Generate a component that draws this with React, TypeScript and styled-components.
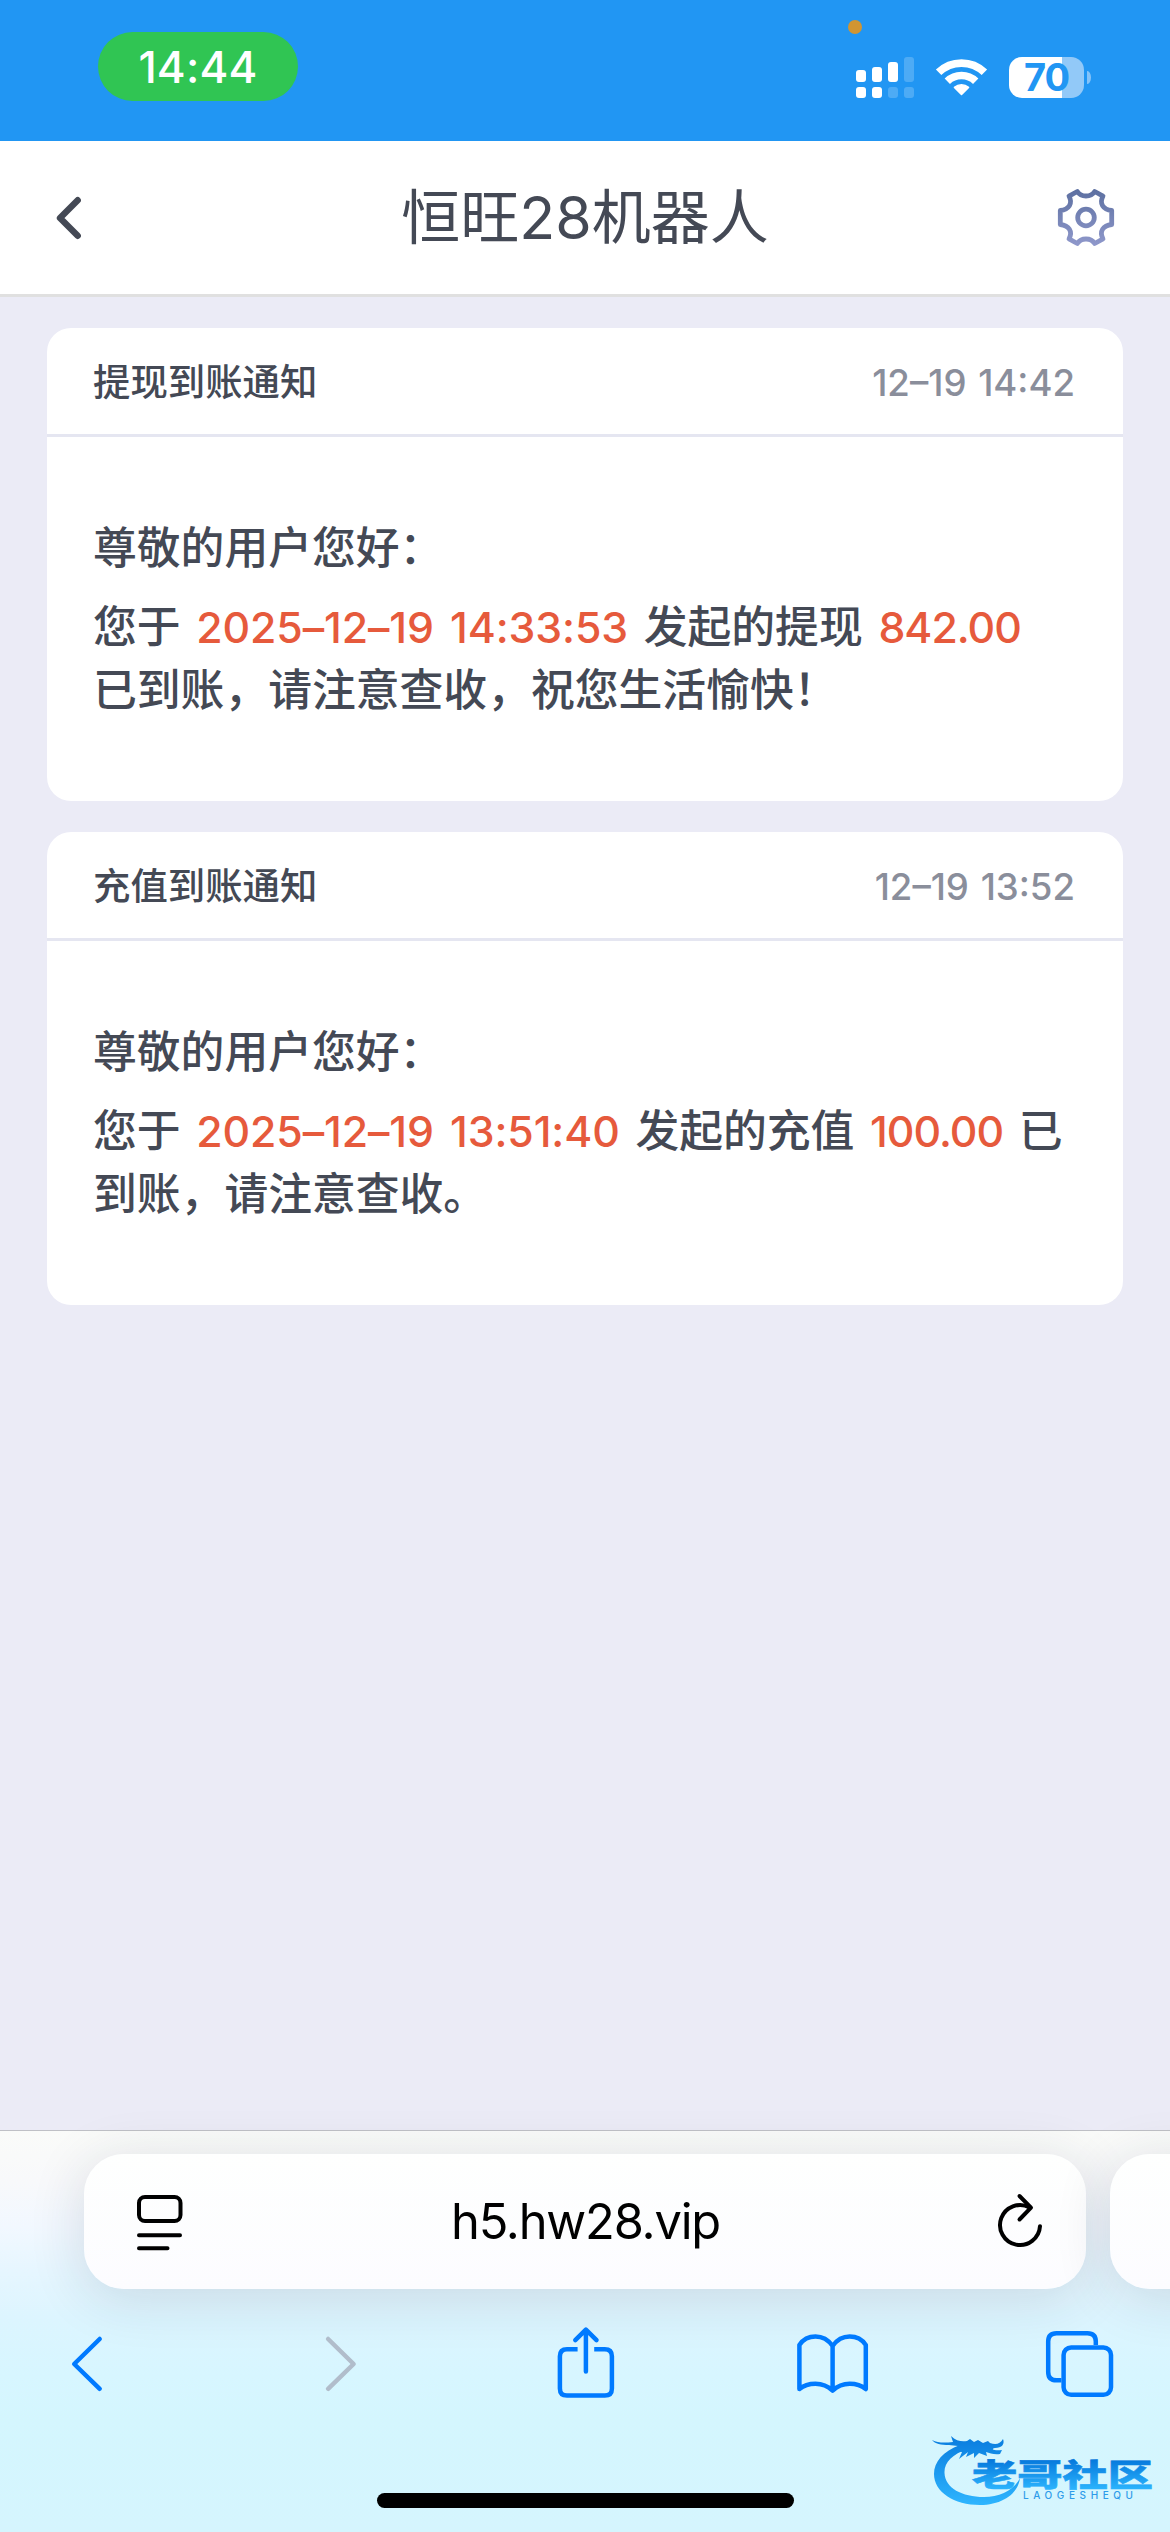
import React from "react";
import styled, { createGlobalStyle } from "styled-components";

const GlobalStyle = createGlobalStyle`
  * { box-sizing: border-box; }
  html, body { margin: 0; padding: 0; }
  body {
    width: 1170px;
    background: #ebebf6;
    font-family: Inter, "Noto Sans CJK SC", sans-serif;
    color: #444955;
  }
  svg { display: block; overflow: visible; }
`;

const Screen = styled.div`
  width: 1170px;
  height: 2532px;
  display: flex;
  flex-direction: column;
  overflow: hidden;
  background: #ebebf6;
`;

/* Status bar */
const StatusBar = styled.header`
  position: relative;
  flex: none;
  height: 141px;
  padding: 32px 79px 0 98px;
  display: flex;
  justify-content: space-between;
  align-items: flex-start;
  background: #2196f3;
`;

const TimePill = styled.div`
  width: 200px;
  height: 69px;
  padding-top: 1px;
  border-radius: 35px;
  display: flex;
  align-items: center;
  justify-content: center;
  background: #30c553;
  color: #fff;
  font-size: 44px;
  font-weight: 500;
  line-height: 68px;
  letter-spacing: 0.2px;
`;

const PrivacyDot = styled.i`
  position: absolute;
  left: 848px;
  top: 20px;
  width: 14px;
  height: 14px;
  border-radius: 50%;
  background: #d19532;
`;

const StatusIcons = styled.div`
  display: flex;
  align-items: flex-start;
  padding-top: 25px;
`;

const SignalIcon = styled.svg`
  margin-right: 22px;
`;

const WifiIcon = styled.svg`
  margin: 2px 22px 0 0;
`;

const Battery = styled.div`
  width: 75px;
  height: 41px;
  border-radius: 13px;
  display: flex;
  align-items: center;
  justify-content: center;
  background: linear-gradient(90deg, #fff 53px, #92c9f8 53px);
  color: #2196f3;
  font-size: 38px;
  font-weight: 700;
  line-height: 41px;
  letter-spacing: -1px;
`;

const BatteryNub = styled.i`
  width: 4px;
  height: 13px;
  margin: 14px 0 0 3px;
  border-radius: 0 4px 4px 0 / 0 7px 7px 0;
  background: #86c3f8;
`;

/* Page header */
const NavBar = styled.nav`
  flex: none;
  height: 156px;
  padding: 0 56px;
  display: grid;
  grid-template-columns: 56px 1fr 56px;
  align-items: center;
  background: #fff;
  border-bottom: 3px solid #e0e0e0;
`;

const Title = styled.h1`
  margin: 0;
  text-align: center;
  font-size: 59px;
  font-weight: 400;
  line-height: 80px;
`;

/* Message cards */
const Messages = styled.main`
  flex: 1;
  display: flex;
  flex-direction: column;
  gap: 31px;
  padding: 31px 47px 0;
`;

const Card = styled.article`
  height: 473px;
  border-radius: 24px;
  background: #fff;
`;

const CardHead = styled.div`
  height: 109px;
  padding: 3px 48px 0 46px;
  display: flex;
  justify-content: space-between;
  align-items: center;
  border-bottom: 3px solid #e5e6f1;
`;

const CardTitle = styled.h2`
  margin: 0;
  font-size: 37.4px;
  font-weight: 500;
  line-height: 54px;
`;

const CardTime = styled.time`
  color: #8a8e9b;
  font-size: 36.6px;
  font-weight: 500;
  line-height: 54px;
  word-spacing: 2px;
`;

const CardBody = styled.div`
  padding: 80px 46px 0;
  font-size: 43.8px;
  font-weight: 500;
  line-height: 63px;
  white-space: nowrap;
`;

const Greeting = styled.p`
  margin: 0 0 16px;
`;

const Line = styled.p`
  margin: 0;
`;

const Highlight = styled.span<{ $tight?: boolean }>`
  margin: 0 4px;
  color: #e65a3c;
  font-size: 42.8px;
  letter-spacing: ${(p) => (p.$tight ? "-1px" : "-0.1px")};
  word-spacing: 5px;
`;

/* Browser chrome */
const BrowserBar = styled.footer`
  position: relative;
  flex: none;
  height: 402px;
  border-top: 1px solid #bfc0c6;
  background: linear-gradient(180deg, #fafbf9 0, #f8f9fb 50px, #f2f8ff 95px, #e6f6ff 140px, #dcf5ff 190px, #d7f6ff 245px, #d4f6fe 290px, #d5f5fe 401px);
`;

const Tabs = styled.div`
  display: flex;
  gap: 24px;
  padding: 23px 0 0 84px;
`;

const AddressBar = styled.div`
  flex: none;
  width: 1002px;
  height: 135px;
  padding: 0 43px 0 53px;
  border-radius: 40px;
  display: grid;
  grid-template-columns: 46px 1fr 46px;
  align-items: center;
  background: linear-gradient(180deg, #fefffe, #fcfcff);
  box-shadow: 0 8px 56px rgba(30, 40, 60, 0.14);
`;

const NextTab = styled(AddressBar)`
  width: 200px;
`;

const Url = styled.span`
  padding-right: 9px;
  text-align: center;
  color: #000;
  font-size: 48.8px;
  font-weight: 400;
  line-height: 60px;
  letter-spacing: -1.2px;
`;

const Toolbar = styled.div`
  display: flex;
  justify-content: space-between;
  padding: 38px 54px 0 51px;
`;

const ToolIcon = styled.svg<{ $muted?: boolean }>`
  width: 72px;
  height: 72px;
  fill: none;
  stroke: ${(p) => (p.$muted ? "#b1bdcb" : "#007aff")};
  stroke-width: 4.5px;
  stroke-linecap: round;
  stroke-linejoin: round;
`;

const HomeIndicator = styled.div`
  width: 417px;
  height: 15px;
  margin: 94px auto 0;
  border-radius: 8px;
  background: #000;
`;

const Watermark = styled.svg`
  position: absolute;
  right: 10px;
  top: 301px;
`;

type Message = {
  title: string;
  time: string;
  lines: React.ReactNode[];
};

const messages: Message[] = [
  {
    title: "提现到账通知",
    time: "12–19 14:42",
    lines: [
      <>
        您于 <Highlight>2025–12–19 14:33:53</Highlight> 发起的提现 <Highlight $tight>842.00</Highlight>
      </>,
      "已到账，请注意查收，祝您生活愉快！",
    ],
  },
  {
    title: "充值到账通知",
    time: "12–19 13:52",
    lines: [
      <>
        您于 <Highlight>2025–12–19 13:51:40</Highlight> 发起的充值 <Highlight $tight>100.00</Highlight> 已
      </>,
      "到账，请注意查收。",
    ],
  },
];

const bars = [
  { x: 0, y: 13, on: true, low: true },
  { x: 16, y: 10, on: true, low: true },
  { x: 32, y: 5, on: true, low: false },
  { x: 48, y: 0, on: false, low: false },
];

function Signal() {
  return (
    <SignalIcon width="58" height="41" viewBox="0 0 58 41" fill="#fff">
      {bars.map((b) => (
        <g key={b.x}>
          <rect x={b.x} y={b.y} width="10" height={25 - b.y} rx="3" opacity={b.on ? 1 : 0.2} />
          <rect x={b.x} y="30" width="10" height="11" rx="3" opacity={b.low ? 1 : 0.2} />
        </g>
      ))}
    </SignalIcon>
  );
}

function Wifi() {
  return (
    <WifiIcon width="51" height="37" viewBox="-25.5 -37 51 37" fill="none" stroke="#fff">
      <path d="M-22.9 -23.7A33 33 0 0 1 22.9 -23.7" strokeWidth="7.8" />
      <path d="M-14.2 -14.8A20.5 20.5 0 0 1 14.2 -14.8" strokeWidth="7.7" />
      <path d="M0 -1.5L-7 -8.6A10.5 10.5 0 0 1 7 -8.6Z" fill="#fff" strokeWidth="1.6" strokeLinejoin="round" />
    </WifiIcon>
  );
}

function Gear() {
  return (
    <svg width="56" height="57" viewBox="-28 -28.5 56 57" fill="none" stroke="url(#gear)" strokeWidth="4.8" strokeLinejoin="round">
      <defs>
        <linearGradient id="gear" gradientUnits="userSpaceOnUse" x1="0" y1="-28" x2="0" y2="28">
          <stop offset="0" stopColor="#5d70a1" />
          <stop offset="1" stopColor="#8f98cb" />
        </linearGradient>
      </defs>
      <path d="M-8.7 -26C-5 -20 5 -20 8.7 -26L17 -21.3C13 -14 17 -8 25.7 -7V7C17 8 13 14 17 21.3L8.7 26C5 20 -5 20 -8.7 26L-17 21.3C-13 14 -17 8 -25.7 7V-7C-17 -8 -13 -14 -17 -21.3Z" />
      <circle r="8.3" />
    </svg>
  );
}

function CommunityLogo() {
  return (
    <Watermark width="230" height="84" viewBox="0 0 230 84">
      <defs>
        <linearGradient id="ring" gradientUnits="userSpaceOnUse" x1="0" y1="8" x2="0" y2="74">
          <stop offset="0" stopColor="#0b7fe0" />
          <stop offset="1" stopColor="#2fb6ff" />
        </linearGradient>
        <linearGradient id="word" gradientUnits="userSpaceOnUse" x1="0" y1="28" x2="0" y2="57">
          <stop offset="0" stopColor="#0679dc" />
          <stop offset="1" stopColor="#2bb3fd" />
        </linearGradient>
      </defs>
      <g fill="url(#ring)">
        <path d="M30 13C13 19 4 30 4 42C4 60 24 73 50 73C72 73 88 62 90 46C84 58 70 65 54 65C32 65 15 56 14.5 41C14 31 22 22 38 17Z" />
        <path d="M2 8C8 11 14 11 23 10L21 4C26 9 32 10 37 9L40 7L44 10L48 8L53 11L58 9L60 11C66 13 70 12 73 7C75 12 72 16 65 16C60 17 64 19 72 18L70 22C64 23 60 21 56 20L57 24L49 21L44 26L44 21L36 25L38 20L29 27L32 20L24 19L28 14L19 13C11 13 5 12 2 8Z" />
      </g>
      <text
        x="42"
        y="53.8"
        textLength="181"
        lengthAdjust="spacingAndGlyphs"
        fontFamily='"Noto Sans CJK SC", sans-serif'
        fontSize="31"
        fontWeight="900"
        fill="url(#word)"
        stroke="url(#word)"
        strokeWidth="0.6"
      >
        老哥社区
      </text>
      <text
        x="93"
        y="66.5"
        textLength="110"
        lengthAdjust="spacing"
        fontFamily="Inter, sans-serif"
        fontSize="10"
        fontWeight="500"
        fill="#2d9bea"
      >
        LAOGESHEQU
      </text>
    </Watermark>
  );
}

export default function App() {
  return (
    <>
      <GlobalStyle />
      <Screen>
        <StatusBar>
          <TimePill>14:44</TimePill>
          <PrivacyDot />
          <StatusIcons>
            <Signal />
            <Wifi />
            <Battery>70</Battery>
            <BatteryNub />
          </StatusIcons>
        </StatusBar>

        <NavBar>
          <svg width="26" height="42" viewBox="0 0 26 42" fill="none" stroke="#444955" strokeWidth="6.4" strokeLinecap="round" strokeLinejoin="round">
            <path d="M21.7 3.2L4 21L21.7 38.8" />
          </svg>
          <Title>恒旺28机器人</Title>
          <Gear />
        </NavBar>

        <Messages>
          {messages.map((m) => (
            <Card key={m.title}>
              <CardHead>
                <CardTitle>{m.title}</CardTitle>
                <CardTime>{m.time}</CardTime>
              </CardHead>
              <CardBody>
                <Greeting>尊敬的用户您好：</Greeting>
                {m.lines.map((line, i) => (
                  <Line key={i}>{line}</Line>
                ))}
              </CardBody>
            </Card>
          ))}
        </Messages>

        <BrowserBar>
          <Tabs>
            <AddressBar>
              <svg width="46" height="54" viewBox="0 0 46 54" fill="none" stroke="#000" strokeWidth="4" strokeLinecap="round">
                <rect x="2" y="2" width="41.5" height="24" rx="6" />
                <path d="M2 40.3H43M2 53.2H30.5" />
              </svg>
              <Url>h5.hw28.vip</Url>
              <svg width="46" height="58" viewBox="0 0 46 58" fill="none" stroke="#000" strokeWidth="4" strokeLinecap="round" strokeLinejoin="round">
                <path d="M43 33.2A20 20 0 1 1 32.5 14.4" />
                <path d="M22.5 3L34 14.6L22.5 26.5" />
              </svg>
            </AddressBar>
            <NextTab />
          </Tabs>
          <Toolbar>
            <ToolIcon viewBox="0 0 72 72">
              <path d="M48.7 12L23.2 37L48.7 61.8" />
            </ToolIcon>
            <ToolIcon viewBox="0 0 72 72" $muted>
              <path d="M29.1 12L54.6 37L29.1 61.8" />
            </ToolIcon>
            <ToolIcon viewBox="0 0 72 72">
              <path d="M29.6 22.2H19Q11.9 22.2 11.9 29.3V61.4Q11.9 68.5 19 68.5H56.8Q63.9 68.5 63.9 61.4V29.3Q63.9 22.2 56.8 22.2H46.2" strokeLinecap="butt" />
              <path d="M37.9 3V44.5M27.3 13.2L37.9 2.6L48.5 13.2" />
            </ToolIcon>
            <ToolIcon viewBox="0 0 72 72">
              <path d="M36.6 19C32 12.6 26.5 9.6 19.5 9.6C12.5 9.6 6.8 13 3.4 18V62C7.5 58.5 13 56.7 19.5 56.7C26.5 56.7 32 59.2 36.6 63.6C41.2 59.2 46.7 56.7 53.7 56.7C60.2 56.7 65.7 58.5 69.8 62V18C66.4 13 60.7 9.6 53.7 9.6C46.7 9.6 41.2 12.6 36.6 19V63" />
            </ToolIcon>
            <ToolIcon viewBox="0 0 72 72">
              <path d="M17.4 53.3H12.5Q4.2 53.3 4.2 45V14.5Q4.2 6.2 12.5 6.2H43.5Q51.8 6.2 51.8 14.5V18" strokeLinecap="butt" />
              <rect x="19.6" y="20.4" width="47.4" height="47.4" rx="7.5" />
            </ToolIcon>
          </Toolbar>
          <HomeIndicator />
          <CommunityLogo />
        </BrowserBar>
      </Screen>
    </>
  );
}
